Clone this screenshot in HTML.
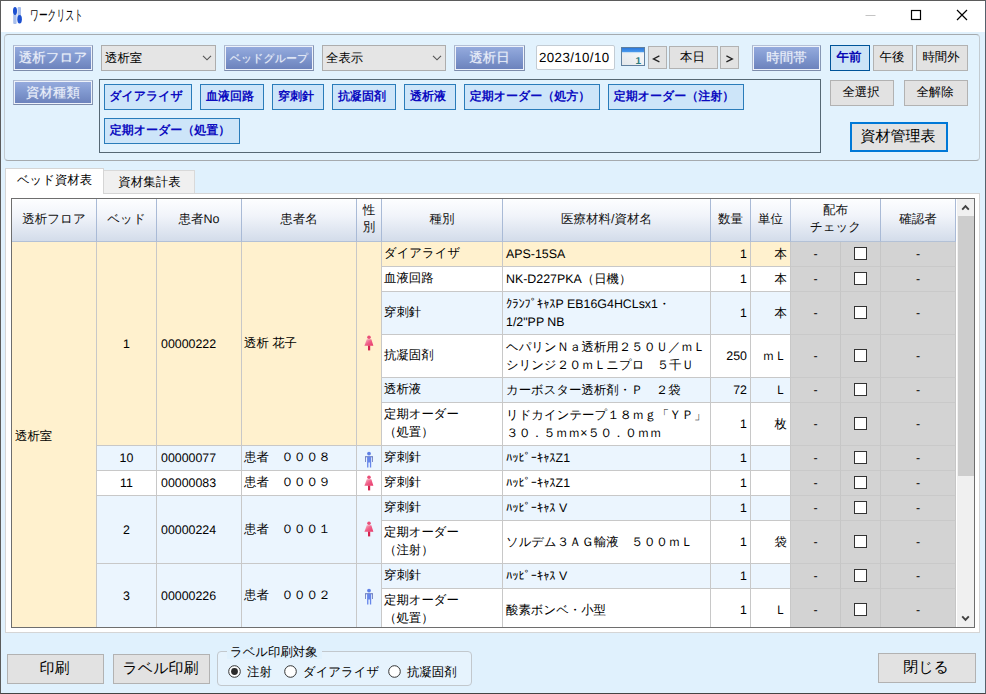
<!DOCTYPE html>
<html lang="ja"><head><meta charset="utf-8"><title>ワークリスト</title>
<style>
*{box-sizing:border-box;margin:0;padding:0}
html,body{width:986px;height:694px;overflow:hidden;background:#e0f1fd}
body{font-family:"Liberation Sans",sans-serif;text-rendering:geometricPrecision;font-size:12.4px;color:#000;position:relative;line-height:1}
div,span{position:absolute;white-space:nowrap}
.win{left:0;top:0;width:986px;height:694px;border:1px solid #5b5b5b;border-right-color:#56616c;border-bottom-color:#444}
.title{left:1px;top:1px;width:984px;height:31px;background:#fff}
.ttext{left:30px;top:8px;font-size:14.5px;line-height:16px;color:#000;transform:scaleX(.6);transform-origin:0 0}
.gb{left:4px;top:34px;width:976px;height:127px;border:1px solid #a5aaae;border-left-color:#c3cbd1;border-right-color:#c3cbd1;border-radius:4px;background:#e2f2fd}
.lb{height:26px;border:1px solid #9aa9c2;border-top-color:#b4c0d6;border-left-color:#a9b6cd;border-bottom-color:#7d8cab;border-right-color:#8797b4;background:linear-gradient(#97acde,#8199d0 45%,#6b81bb);color:#e8edf8;font-size:13.5px;line-height:23px;text-align:center;box-shadow:inset 0 0 0 1px #eef2fa;text-shadow:0 0 1px rgba(255,255,255,.55);overflow:hidden}
.cb{height:26px;border:1px solid #adadad;background:#e5e5e5;font-size:12.4px;line-height:24px;padding-left:3px;overflow:hidden}
.btn{border:1px solid #b2b2b2;background:#e2e2e2;text-align:center;overflow:hidden;padding-right:2px}
.tag{height:26px;border:1px solid #2a7cba;background:#cde5f9;color:#0c0cc0;font-weight:bold;font-size:12px;line-height:22px;text-align:center;overflow:hidden;padding-right:4px}
.panel{left:99px;top:79px;width:722px;height:74px;border:1px solid #566874;background:#e2f2fd}
.tabpage{left:5px;top:193px;width:975px;height:440px;background:#fff;border:1px solid #d5d5d5}
.tab1{left:5px;top:168px;width:99px;height:26px;background:#fff;border:1px solid #d5d5d5;border-bottom:none;text-align:center;line-height:23px;letter-spacing:0;padding-right:0px}
.tab2{left:103px;top:170px;width:92px;height:23px;background:#f0f0f0;border:1px solid #d9d9d9;border-bottom:none;text-align:center;line-height:22px;letter-spacing:0.1px;padding-left:1px}
.tbl{left:11px;top:198px;width:964px;height:430px;border:1px solid #6e6e6e;background:#fff;overflow:hidden}
.c{overflow:hidden;border-right:1px solid #c8c8c8;border-bottom:1px solid #c8c8c8;font-size:12.4px}
.h{background:linear-gradient(#fdfeff,#f1f4fa 40%,#d3dcea);border-right:1px solid #a9bad6;border-bottom:1px solid #b3c1d6;text-align:center;color:#111;font-size:12.5px}
.cream{background:#fff1ce}
.lbl{background:#ebf5fe}
.wht{background:#fff}
.gry{background:#d3d3d3;border-right-color:#c6c6c6;border-bottom-color:#c9c9c9;text-align:center}
.t{left:0;right:0}
.chk{width:13px;height:13px;border:1px solid #333;background:#fff}
</style></head>
<body>
<div class="win"></div>
<div class="title"></div>
<svg style="position:absolute;left:12px;top:6px" width="12" height="19" viewBox="0 0 12 19"><rect x="1.2" y="8" width="3.4" height="10" rx="1" fill="#a9bfec"/><rect x="5.6" y="1" width="3.4" height="10" rx="1" fill="#a9bfec"/><ellipse cx="3" cy="5" rx="2" ry="4" fill="#1b4fd0"/><ellipse cx="7.6" cy="13.3" rx="2.3" ry="4.2" fill="#1b4fd0"/></svg>
<div class="ttext">ワークリスト</div>
<svg style="position:absolute;left:860px;top:5px" width="115" height="22" viewBox="0 0 115 22"><path d="M5.5 10.5H15.5" stroke="#c4c4c4" stroke-width="1"/><rect x="51.5" y="5.5" width="9" height="9" fill="none" stroke="#000" stroke-width="1.2"/><path d="M97 5L107 15M107 5L97 15" stroke="#000" stroke-width="1.2"/></svg>
<div class="gb"></div>
<div class="lb" style="left:13px;top:45px;width:80px;height:26px;line-height:23px">透析フロア</div>
<div class="lb" style="left:224px;top:45px;width:90px;height:26px;line-height:23px"><span style="position:static;font-size:11px">ベッドグループ</span></div>
<div class="lb" style="left:454px;top:45px;width:71px;height:26px;line-height:23px">透析日</div>
<div class="lb" style="left:752px;top:45px;width:69px;height:26px;line-height:23px">時間帯</div>
<div class="lb" style="left:13px;top:80px;width:80px;height:25px;line-height:24px">資材種類</div>
<div class="cb" style="left:101px;top:45px;width:115px">透析室<svg style="position:absolute;right:3px;top:9px" width="10" height="6" viewBox="0 0 10 6"><path d="M1 0.8L5 4.8L9 0.8" fill="none" stroke="#555" stroke-width="1.15"/></svg></div>
<div class="cb" style="left:322px;top:45px;width:124px">全表示<svg style="position:absolute;right:3px;top:9px" width="10" height="6" viewBox="0 0 10 6"><path d="M1 0.8L5 4.8L9 0.8" fill="none" stroke="#555" stroke-width="1.15"/></svg></div>
<div style="left:536px;top:45px;width:79px;height:25px;background:#fff;border:1px solid #c3ccd4;border-radius:2px;font-size:13.3px;line-height:23px;padding-left:2px;letter-spacing:0.4px">2023/10/10</div>
<svg style="position:absolute;left:621px;top:47px" width="24" height="19" viewBox="0 0 24 19"><defs><linearGradient id="cg" x1="0" y1="1" x2="1" y2="0"><stop offset="0" stop-color="#e2e6ea"/><stop offset="1" stop-color="#fbfcfd"/></linearGradient><linearGradient id="ch" x1="0" y1="0" x2="0" y2="1"><stop offset="0" stop-color="#2b78dc"/><stop offset="1" stop-color="#4c9cee"/></linearGradient></defs><rect x="0.5" y="0.5" width="23" height="18" fill="url(#cg)" stroke="#5f7f9f"/><rect x="1" y="1" width="22" height="4.2" fill="url(#ch)"/><rect x="1" y="5.2" width="22" height="0.9" fill="#c4dcf2"/><text x="17.2" y="16.6" font-family="Liberation Sans, sans-serif" font-size="10" font-weight="bold" fill="#2c7c7e" text-anchor="middle">1</text></svg>
<div class="btn" style="left:648px;top:46px;width:19px;height:23px;font-size:13px;line-height:20px;"><svg style="position:absolute;left:3px;top:8px" width="9" height="8" viewBox="0 0 9 8"><path d="M7.4 0.9L1.4 3.9L7.4 6.9" fill="none" stroke="#222" stroke-width="1.25"/></svg></div>
<div class="btn" style="left:669px;top:46px;width:49px;height:23px;font-size:12.4px;line-height:20px;">本日</div>
<div class="btn" style="left:720px;top:46px;width:19px;height:23px;font-size:13px;line-height:20px;"><svg style="position:absolute;left:4px;top:8px" width="9" height="8" viewBox="0 0 9 8"><path d="M1.4 0.9L7.4 3.9L1.4 6.9" fill="none" stroke="#222" stroke-width="1.25"/></svg></div>
<div class="btn" style="left:830px;top:45px;width:40px;height:26px;background:#cce4f7;border-color:#005499;color:#0a0ab4;font-weight:bold;line-height:23px">午前</div>
<div class="btn" style="left:873px;top:45px;width:40px;height:26px;font-size:12.4px;line-height:23px;">午後</div>
<div class="btn" style="left:916px;top:45px;width:52px;height:26px;font-size:12.4px;line-height:23px;">時間外</div>
<div class="btn" style="left:830px;top:80px;width:64px;height:26px;font-size:12.4px;line-height:23px;">全選択</div>
<div class="btn" style="left:904px;top:80px;width:64px;height:26px;font-size:12.4px;line-height:23px;">全解除</div>
<div class="btn" style="left:850px;top:122px;width:98px;height:30px;border:2px solid #0078d7;font-size:15px;line-height:25px">資材管理表</div>
<div class="panel"></div>
<div class="tag" style="left:104px;top:84px;width:88px">ダイアライザ</div>
<div class="tag" style="left:200px;top:84px;width:64px">血液回路</div>
<div class="tag" style="left:272px;top:84px;width:52px">穿刺針</div>
<div class="tag" style="left:332px;top:84px;width:64px">抗凝固剤</div>
<div class="tag" style="left:404px;top:84px;width:52px">透析液</div>
<div class="tag" style="left:464px;top:84px;width:136px">定期オーダー（処方）</div>
<div class="tag" style="left:608px;top:84px;width:136px">定期オーダー（注射）</div>
<div class="tag" style="left:104px;top:118px;width:136px">定期オーダー（処置）</div>
<div class="tabpage"></div>
<div class="tab2">資材集計表</div>
<div class="tab1">ベッド資材表</div>
<div class="tbl">
<div class="c h" style="left:0px;top:0px;width:85px;height:43px;"><span class="t" style="top:14px;">透析フロア</span></div>
<div class="c h" style="left:85px;top:0px;width:60px;height:43px;"><span class="t" style="top:14px;">ベッド</span></div>
<div class="c h" style="left:145px;top:0px;width:85px;height:43px;"><span class="t" style="top:14px;">患者No</span></div>
<div class="c h" style="left:230px;top:0px;width:115px;height:43px;"><span class="t" style="top:14px;">患者名</span></div>
<div class="c h" style="left:345px;top:0px;width:25px;height:43px;"><span class="t" style="top:5px;">性</span><span class="t" style="top:22px;">別</span></div>
<div class="c h" style="left:370px;top:0px;width:121px;height:43px;"><span class="t" style="top:14px;">種別</span></div>
<div class="c h" style="left:491px;top:0px;width:208px;height:43px;"><span class="t" style="top:14px;">医療材料/資材名</span></div>
<div class="c h" style="left:699px;top:0px;width:40px;height:43px;"><span class="t" style="top:14px;">数量</span></div>
<div class="c h" style="left:739px;top:0px;width:40px;height:43px;"><span class="t" style="top:14px;">単位</span></div>
<div class="c h" style="left:779px;top:0px;width:90px;height:43px;"><span class="t" style="top:5px;">配布</span><span class="t" style="top:22px;">チェック</span></div>
<div class="c h" style="left:869px;top:0px;width:75px;height:43px;"><span class="t" style="top:14px;">確認者</span></div>
<div class="c cream" style="left:0px;top:43px;width:85px;height:390px;"><span class="t" style="top:188px;left:3px">透析室</span></div>
<div class="c cream" style="left:85px;top:43px;width:60px;height:204px;"><span class="t" style="top:96px;text-align:center">1</span></div>
<div class="c cream" style="left:145px;top:43px;width:85px;height:204px;"><span class="t" style="top:96px;left:4px">00000222</span></div>
<div class="c cream" style="left:230px;top:43px;width:115px;height:204px;"><span class="t" style="top:95px;left:2px">透析 花子</span></div>
<div class="c cream" style="left:345px;top:43px;width:25px;height:204px;"><svg style="position:absolute;left:4px;top:93px" width="16" height="17" viewBox="0 0 16 17"><defs><linearGradient id="fg" x1="0" y1="0" x2="1" y2="0.9"><stop offset="0" stop-color="#f9c3cd"/><stop offset="0.5" stop-color="#f0628a"/><stop offset="1" stop-color="#e8386a"/></linearGradient></defs><ellipse cx="8" cy="2.3" rx="1.8" ry="1.7" fill="#ea5079"/><path d="M5.8 4.2H10.3L12.4 10.8H3.4z" fill="url(#fg)"/><rect x="7" y="10.6" width="2.2" height="4.8" fill="#d4244f"/></svg></div>
<div class="c lbl" style="left:85px;top:247px;width:60px;height:25px;"><span class="t" style="top:6px;text-align:center">10</span></div>
<div class="c lbl" style="left:145px;top:247px;width:85px;height:25px;"><span class="t" style="top:6px;left:4px">00000077</span></div>
<div class="c lbl" style="left:230px;top:247px;width:115px;height:25px;"><span class="t" style="top:5px;left:2px">患者　０００８</span></div>
<div class="c lbl" style="left:345px;top:247px;width:25px;height:25px;"><svg style="position:absolute;left:4px;top:5px" width="16" height="17" viewBox="0 0 16 17"><circle cx="8" cy="2.6" r="1.9" fill="#5f80e6"/><path d="M4 5.3H12V11H11.2V6.2H4.8V11H4z" fill="#6272b8"/><path d="M6.1 5.8H10.2V16.4H8.9V11.4H7.4V16.4H6.1z" fill="#6686ea"/></svg></div>
<div class="c wht" style="left:85px;top:272px;width:60px;height:25px;"><span class="t" style="top:6px;text-align:center">11</span></div>
<div class="c wht" style="left:145px;top:272px;width:85px;height:25px;"><span class="t" style="top:6px;left:4px">00000083</span></div>
<div class="c wht" style="left:230px;top:272px;width:115px;height:25px;"><span class="t" style="top:5px;left:2px">患者　０００９</span></div>
<div class="c wht" style="left:345px;top:272px;width:25px;height:25px;"><svg style="position:absolute;left:4px;top:4px" width="16" height="17" viewBox="0 0 16 17"><defs><linearGradient id="fg" x1="0" y1="0" x2="1" y2="0.9"><stop offset="0" stop-color="#f9c3cd"/><stop offset="0.5" stop-color="#f0628a"/><stop offset="1" stop-color="#e8386a"/></linearGradient></defs><ellipse cx="8" cy="2.3" rx="1.8" ry="1.7" fill="#ea5079"/><path d="M5.8 4.2H10.3L12.4 10.8H3.4z" fill="url(#fg)"/><rect x="7" y="10.6" width="2.2" height="4.8" fill="#d4244f"/></svg></div>
<div class="c lbl" style="left:85px;top:297px;width:60px;height:68px;"><span class="t" style="top:28px;text-align:center">2</span></div>
<div class="c lbl" style="left:145px;top:297px;width:85px;height:68px;"><span class="t" style="top:28px;left:4px">00000224</span></div>
<div class="c lbl" style="left:230px;top:297px;width:115px;height:68px;"><span class="t" style="top:27px;left:2px">患者　０００１</span></div>
<div class="c lbl" style="left:345px;top:297px;width:25px;height:68px;"><svg style="position:absolute;left:4px;top:25px" width="16" height="17" viewBox="0 0 16 17"><defs><linearGradient id="fg" x1="0" y1="0" x2="1" y2="0.9"><stop offset="0" stop-color="#f9c3cd"/><stop offset="0.5" stop-color="#f0628a"/><stop offset="1" stop-color="#e8386a"/></linearGradient></defs><ellipse cx="8" cy="2.3" rx="1.8" ry="1.7" fill="#ea5079"/><path d="M5.8 4.2H10.3L12.4 10.8H3.4z" fill="url(#fg)"/><rect x="7" y="10.6" width="2.2" height="4.8" fill="#d4244f"/></svg></div>
<div class="c lbl" style="left:85px;top:365px;width:60px;height:68px;"><span class="t" style="top:26px;text-align:center">3</span></div>
<div class="c lbl" style="left:145px;top:365px;width:85px;height:68px;"><span class="t" style="top:26px;left:4px">00000226</span></div>
<div class="c lbl" style="left:230px;top:365px;width:115px;height:68px;"><span class="t" style="top:25px;left:2px">患者　０００２</span></div>
<div class="c lbl" style="left:345px;top:365px;width:25px;height:68px;"><svg style="position:absolute;left:4px;top:24px" width="16" height="17" viewBox="0 0 16 17"><circle cx="8" cy="2.6" r="1.9" fill="#5f80e6"/><path d="M4 5.3H12V11H11.2V6.2H4.8V11H4z" fill="#6272b8"/><path d="M6.1 5.8H10.2V16.4H8.9V11.4H7.4V16.4H6.1z" fill="#6686ea"/></svg></div>
<div class="c cream" style="left:370px;top:43px;width:121px;height:25px;"><span class="t" style="top:5px;left:2px">ダイアライザ</span></div>
<div class="c cream" style="left:491px;top:43px;width:208px;height:25px;"><span class="t" style="top:6px;left:3px">APS-15SA</span></div>
<div class="c cream" style="left:699px;top:43px;width:40px;height:25px;"><span class="t" style="top:6px;text-align:right;right:3px">1</span></div>
<div class="c cream" style="left:739px;top:43px;width:40px;height:25px;"><span class="t" style="top:6px;text-align:right;right:3px">本</span></div>
<div class="c gry" style="left:779px;top:43px;width:50px;height:25px;"><span class="t" style="top:6px;">-</span></div>
<div class="c gry" style="left:829px;top:43px;width:40px;height:25px;"><div class="chk" style="left:13px;top:5px"></div></div>
<div class="c gry" style="left:869px;top:43px;width:75px;height:25px;"><span class="t" style="top:6px;">-</span></div>
<div class="c wht" style="left:370px;top:68px;width:121px;height:25px;"><span class="t" style="top:5px;left:2px">血液回路</span></div>
<div class="c wht" style="left:491px;top:68px;width:208px;height:25px;"><span class="t" style="top:6px;left:3px">NK-D227PKA（日機）</span></div>
<div class="c wht" style="left:699px;top:68px;width:40px;height:25px;"><span class="t" style="top:6px;text-align:right;right:3px">1</span></div>
<div class="c wht" style="left:739px;top:68px;width:40px;height:25px;"><span class="t" style="top:6px;text-align:right;right:3px">本</span></div>
<div class="c gry" style="left:779px;top:68px;width:50px;height:25px;"><span class="t" style="top:6px;">-</span></div>
<div class="c gry" style="left:829px;top:68px;width:40px;height:25px;"><div class="chk" style="left:13px;top:5px"></div></div>
<div class="c gry" style="left:869px;top:68px;width:75px;height:25px;"><span class="t" style="top:6px;">-</span></div>
<div class="c lbl" style="left:370px;top:93px;width:121px;height:43px;"><span class="t" style="top:14px;left:2px">穿刺針</span></div>
<div class="c lbl" style="left:491px;top:93px;width:208px;height:43px;"><span class="t" style="top:6px;left:3px">ｸﾗﾝﾌﾟｷｬｽP EB16G4HCLsx1・</span><span class="t" style="top:24px;left:3px">1/2"PP NB</span></div>
<div class="c lbl" style="left:699px;top:93px;width:40px;height:43px;"><span class="t" style="top:15px;text-align:right;right:3px">1</span></div>
<div class="c lbl" style="left:739px;top:93px;width:40px;height:43px;"><span class="t" style="top:15px;text-align:right;right:3px">本</span></div>
<div class="c gry" style="left:779px;top:93px;width:50px;height:43px;"><span class="t" style="top:15px;">-</span></div>
<div class="c gry" style="left:829px;top:93px;width:40px;height:43px;"><div class="chk" style="left:13px;top:14px"></div></div>
<div class="c gry" style="left:869px;top:93px;width:75px;height:43px;"><span class="t" style="top:15px;">-</span></div>
<div class="c wht" style="left:370px;top:136px;width:121px;height:43px;"><span class="t" style="top:14px;left:2px">抗凝固剤</span></div>
<div class="c wht" style="left:491px;top:136px;width:208px;height:43px;"><span class="t" style="top:6px;left:3px">ヘパリンＮａ透析用２５０Ｕ／ｍＬ</span><span class="t" style="top:24px;left:3px">シリンジ２０ｍＬニプロ　５千Ｕ</span></div>
<div class="c wht" style="left:699px;top:136px;width:40px;height:43px;"><span class="t" style="top:15px;text-align:right;right:3px">250</span></div>
<div class="c wht" style="left:739px;top:136px;width:40px;height:43px;"><span class="t" style="top:15px;text-align:right;right:3px">ｍＬ</span></div>
<div class="c gry" style="left:779px;top:136px;width:50px;height:43px;"><span class="t" style="top:15px;">-</span></div>
<div class="c gry" style="left:829px;top:136px;width:40px;height:43px;"><div class="chk" style="left:13px;top:14px"></div></div>
<div class="c gry" style="left:869px;top:136px;width:75px;height:43px;"><span class="t" style="top:15px;">-</span></div>
<div class="c lbl" style="left:370px;top:179px;width:121px;height:25px;"><span class="t" style="top:5px;left:2px">透析液</span></div>
<div class="c lbl" style="left:491px;top:179px;width:208px;height:25px;"><span class="t" style="top:6px;left:3px">カーボスター透析剤・Ｐ　２袋</span></div>
<div class="c lbl" style="left:699px;top:179px;width:40px;height:25px;"><span class="t" style="top:6px;text-align:right;right:3px">72</span></div>
<div class="c lbl" style="left:739px;top:179px;width:40px;height:25px;"><span class="t" style="top:6px;text-align:right;right:3px">Ｌ</span></div>
<div class="c gry" style="left:779px;top:179px;width:50px;height:25px;"><span class="t" style="top:6px;">-</span></div>
<div class="c gry" style="left:829px;top:179px;width:40px;height:25px;"><div class="chk" style="left:13px;top:5px"></div></div>
<div class="c gry" style="left:869px;top:179px;width:75px;height:25px;"><span class="t" style="top:6px;">-</span></div>
<div class="c wht" style="left:370px;top:204px;width:121px;height:43px;"><span class="t" style="top:5px;left:2px">定期オーダー</span><span class="t" style="top:23px;left:2px">（処置）</span></div>
<div class="c wht" style="left:491px;top:204px;width:208px;height:43px;"><span class="t" style="top:6px;left:3px">リドカインテープ１８ｍｇ「ＹＰ」</span><span class="t" style="top:24px;left:3px">３０．５ｍｍ×５０．０ｍｍ</span></div>
<div class="c wht" style="left:699px;top:204px;width:40px;height:43px;"><span class="t" style="top:15px;text-align:right;right:3px">1</span></div>
<div class="c wht" style="left:739px;top:204px;width:40px;height:43px;"><span class="t" style="top:15px;text-align:right;right:3px">枚</span></div>
<div class="c gry" style="left:779px;top:204px;width:50px;height:43px;"><span class="t" style="top:15px;">-</span></div>
<div class="c gry" style="left:829px;top:204px;width:40px;height:43px;"><div class="chk" style="left:13px;top:14px"></div></div>
<div class="c gry" style="left:869px;top:204px;width:75px;height:43px;"><span class="t" style="top:15px;">-</span></div>
<div class="c lbl" style="left:370px;top:247px;width:121px;height:25px;"><span class="t" style="top:5px;left:2px">穿刺針</span></div>
<div class="c lbl" style="left:491px;top:247px;width:208px;height:25px;"><span class="t" style="top:6px;left:3px">ﾊｯﾋﾟｰｷｬｽZ1</span></div>
<div class="c lbl" style="left:699px;top:247px;width:40px;height:25px;"><span class="t" style="top:6px;text-align:right;right:3px">1</span></div>
<div class="c lbl" style="left:739px;top:247px;width:40px;height:25px;"><span class="t" style="top:6px;text-align:right;right:3px"></span></div>
<div class="c gry" style="left:779px;top:247px;width:50px;height:25px;"><span class="t" style="top:6px;">-</span></div>
<div class="c gry" style="left:829px;top:247px;width:40px;height:25px;"><div class="chk" style="left:13px;top:5px"></div></div>
<div class="c gry" style="left:869px;top:247px;width:75px;height:25px;"><span class="t" style="top:6px;">-</span></div>
<div class="c wht" style="left:370px;top:272px;width:121px;height:25px;"><span class="t" style="top:5px;left:2px">穿刺針</span></div>
<div class="c wht" style="left:491px;top:272px;width:208px;height:25px;"><span class="t" style="top:6px;left:3px">ﾊｯﾋﾟｰｷｬｽZ1</span></div>
<div class="c wht" style="left:699px;top:272px;width:40px;height:25px;"><span class="t" style="top:6px;text-align:right;right:3px">1</span></div>
<div class="c wht" style="left:739px;top:272px;width:40px;height:25px;"><span class="t" style="top:6px;text-align:right;right:3px"></span></div>
<div class="c gry" style="left:779px;top:272px;width:50px;height:25px;"><span class="t" style="top:6px;">-</span></div>
<div class="c gry" style="left:829px;top:272px;width:40px;height:25px;"><div class="chk" style="left:13px;top:5px"></div></div>
<div class="c gry" style="left:869px;top:272px;width:75px;height:25px;"><span class="t" style="top:6px;">-</span></div>
<div class="c lbl" style="left:370px;top:297px;width:121px;height:25px;"><span class="t" style="top:5px;left:2px">穿刺針</span></div>
<div class="c lbl" style="left:491px;top:297px;width:208px;height:25px;"><span class="t" style="top:6px;left:3px">ﾊｯﾋﾟｰｷｬｽ V</span></div>
<div class="c lbl" style="left:699px;top:297px;width:40px;height:25px;"><span class="t" style="top:6px;text-align:right;right:3px">1</span></div>
<div class="c lbl" style="left:739px;top:297px;width:40px;height:25px;"><span class="t" style="top:6px;text-align:right;right:3px"></span></div>
<div class="c gry" style="left:779px;top:297px;width:50px;height:25px;"><span class="t" style="top:6px;">-</span></div>
<div class="c gry" style="left:829px;top:297px;width:40px;height:25px;"><div class="chk" style="left:13px;top:5px"></div></div>
<div class="c gry" style="left:869px;top:297px;width:75px;height:25px;"><span class="t" style="top:6px;">-</span></div>
<div class="c wht" style="left:370px;top:322px;width:121px;height:43px;"><span class="t" style="top:5px;left:2px">定期オーダー</span><span class="t" style="top:23px;left:2px">（注射）</span></div>
<div class="c wht" style="left:491px;top:322px;width:208px;height:43px;"><span class="t" style="top:15px;left:3px">ソルデム３ＡＧ輸液　５００ｍＬ</span></div>
<div class="c wht" style="left:699px;top:322px;width:40px;height:43px;"><span class="t" style="top:15px;text-align:right;right:3px">1</span></div>
<div class="c wht" style="left:739px;top:322px;width:40px;height:43px;"><span class="t" style="top:15px;text-align:right;right:3px">袋</span></div>
<div class="c gry" style="left:779px;top:322px;width:50px;height:43px;"><span class="t" style="top:15px;">-</span></div>
<div class="c gry" style="left:829px;top:322px;width:40px;height:43px;"><div class="chk" style="left:13px;top:14px"></div></div>
<div class="c gry" style="left:869px;top:322px;width:75px;height:43px;"><span class="t" style="top:15px;">-</span></div>
<div class="c lbl" style="left:370px;top:365px;width:121px;height:25px;"><span class="t" style="top:5px;left:2px">穿刺針</span></div>
<div class="c lbl" style="left:491px;top:365px;width:208px;height:25px;"><span class="t" style="top:6px;left:3px">ﾊｯﾋﾟｰｷｬｽ V</span></div>
<div class="c lbl" style="left:699px;top:365px;width:40px;height:25px;"><span class="t" style="top:6px;text-align:right;right:3px">1</span></div>
<div class="c lbl" style="left:739px;top:365px;width:40px;height:25px;"><span class="t" style="top:6px;text-align:right;right:3px"></span></div>
<div class="c gry" style="left:779px;top:365px;width:50px;height:25px;"><span class="t" style="top:6px;">-</span></div>
<div class="c gry" style="left:829px;top:365px;width:40px;height:25px;"><div class="chk" style="left:13px;top:5px"></div></div>
<div class="c gry" style="left:869px;top:365px;width:75px;height:25px;"><span class="t" style="top:6px;">-</span></div>
<div class="c wht" style="left:370px;top:390px;width:121px;height:43px;"><span class="t" style="top:5px;left:2px">定期オーダー</span><span class="t" style="top:23px;left:2px">（処置）</span></div>
<div class="c wht" style="left:491px;top:390px;width:208px;height:43px;"><span class="t" style="top:15px;left:3px">酸素ボンベ・小型</span></div>
<div class="c wht" style="left:699px;top:390px;width:40px;height:43px;"><span class="t" style="top:15px;text-align:right;right:3px">1</span></div>
<div class="c wht" style="left:739px;top:390px;width:40px;height:43px;"><span class="t" style="top:15px;text-align:right;right:3px">Ｌ</span></div>
<div class="c gry" style="left:779px;top:390px;width:50px;height:43px;"><span class="t" style="top:15px;">-</span></div>
<div class="c gry" style="left:829px;top:390px;width:40px;height:43px;"><div class="chk" style="left:13px;top:14px"></div></div>
<div class="c gry" style="left:869px;top:390px;width:75px;height:43px;"><span class="t" style="top:15px;">-</span></div>
<div style="left:944px;top:0;width:18px;height:428px;background:#fff"></div>
<div style="left:945px;top:0;width:17px;height:428px;background:#f0f0f0"></div>
<div style="left:946px;top:17px;width:16px;height:260px;background:#cdcdcd"></div>
<svg style="position:absolute;left:949px;top:5px" width="9" height="7" viewBox="0 0 9 7"><path d="M1.2 5.6L4.5 2.2L7.8 5.6" fill="none" stroke="#404040" stroke-width="1.9"/></svg>
<svg style="position:absolute;left:949px;top:416px" width="9" height="7" viewBox="0 0 9 7"><path d="M1.2 1.4L4.5 4.8L7.8 1.4" fill="none" stroke="#404040" stroke-width="1.9"/></svg>
</div>
<div class="btn" style="left:7px;top:654px;width:97px;height:30px;font-size:15px;line-height:27px;">印刷</div>
<div class="btn" style="left:113px;top:654px;width:97px;height:30px;font-size:15px;line-height:27px;">ラベル印刷</div>
<div class="btn" style="left:878px;top:653px;width:98px;height:30px;font-size:15px;line-height:27px;">閉じる</div>
<div style="left:217px;top:651px;width:255px;height:35px;border:1px solid #c2c8cd;border-radius:4px;background:#e6f3fd"></div>
<div style="left:227px;top:645px;height:14px;line-height:14px;padding:0 4px 0 3px;background:#e0f1fd">ラベル印刷対象</div>
<svg style="position:absolute;left:228.0px;top:665.0px" width="13" height="13" viewBox="0 0 13 13"><circle cx="6.5" cy="6.5" r="5.8" fill="#fff" stroke="#333" stroke-width="1"/><circle cx="6.5" cy="6.5" r="3.4" fill="#2a2a2a"/></svg>
<div style="left:247px;top:664.5px;font-size:12.4px;line-height:14px">注射</div>
<svg style="position:absolute;left:284.0px;top:665.0px" width="13" height="13" viewBox="0 0 13 13"><circle cx="6.5" cy="6.5" r="5.8" fill="#fff" stroke="#333" stroke-width="1"/></svg>
<div style="left:303px;top:664.5px;font-size:12.4px;line-height:14px">ダイアライザ</div>
<svg style="position:absolute;left:388.0px;top:665.0px" width="13" height="13" viewBox="0 0 13 13"><circle cx="6.5" cy="6.5" r="5.8" fill="#fff" stroke="#333" stroke-width="1"/></svg>
<div style="left:407px;top:664.5px;font-size:12.4px;line-height:14px">抗凝固剤</div>
</body></html>
